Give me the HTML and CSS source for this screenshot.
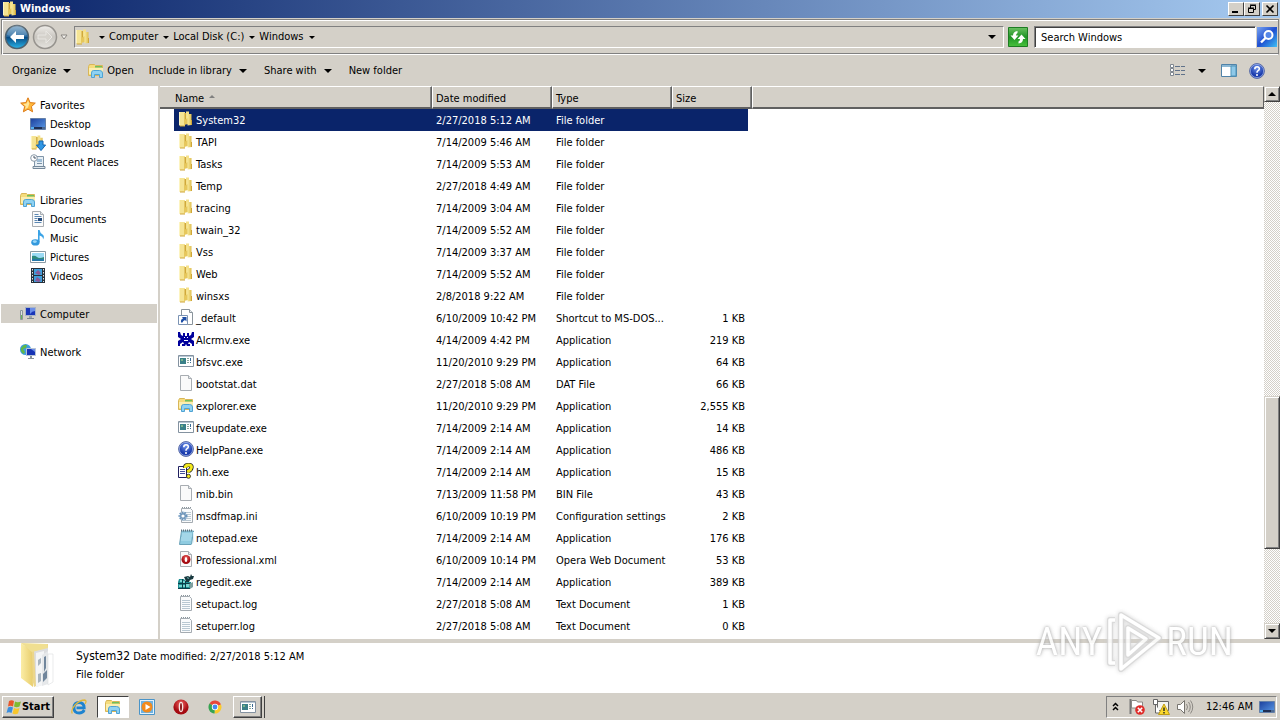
FILE: index.html
```html
<!DOCTYPE html>
<html lang="en">
<head>
  <meta charset="UTF-8">
  <title>Windows</title>
  <link rel="stylesheet" href="styles.css">
</head>
<body>
  <!-- Icon definitions -->
  <svg class="defs" aria-hidden="true">
    <defs>
      <linearGradient id="gFolder"><stop offset="0" stop-color="#f8ea9e"/><stop offset="1" stop-color="#dfbe4e"/></linearGradient>
      <linearGradient id="gScreen" x2="1" y2="1"><stop offset="0" stop-color="#1c3f9c"/><stop offset="1" stop-color="#5b9be8"/></linearGradient>
      <linearGradient id="gBack" x2="0" y2="1"><stop offset="0" stop-color="#7fa9c9"/><stop offset=".48" stop-color="#20649c"/><stop offset=".5" stop-color="#07477f"/><stop offset="1" stop-color="#29b6ec"/></linearGradient>
      <linearGradient id="gFwd" x2="0" y2="1"><stop offset="0" stop-color="#f0eeea"/><stop offset=".5" stop-color="#c9c6c0"/><stop offset="1" stop-color="#e6e4df"/></linearGradient>
      <radialGradient id="gHelp" cy=".3"><stop offset="0" stop-color="#6f93ea"/><stop offset="1" stop-color="#1a3bac"/></radialGradient>
      <radialGradient id="gRed" cy=".3"><stop offset="0" stop-color="#f0625f"/><stop offset="1" stop-color="#a50b12"/></radialGradient>
      <linearGradient id="gBig"><stop offset="0" stop-color="#fbeda6"/><stop offset="1" stop-color="#e8cd6c"/></linearGradient>
      <linearGradient id="gGreen" x2="0" y2="1"><stop offset="0" stop-color="#6cc163"/><stop offset=".5" stop-color="#1f9426"/><stop offset="1" stop-color="#48c13c"/></linearGradient>
      <linearGradient id="gFind" x2="1" y2="1"><stop offset="0" stop-color="#7aa4f0"/><stop offset=".5" stop-color="#1f4fd0"/><stop offset="1" stop-color="#3fc0f4"/></linearGradient>
    </defs>
    <symbol id="folder" viewBox="0 0 16 16">
      <path d="M1 1h6v14H2l-1-1z" fill="#f5e494"/><path d="M1 1h1v13H1z" fill="#fdf4c0"/>
      <path d="M6.500 2h2v11h-2z" fill="#d0a93a"/><path d="M8 .5h3v8H8z" fill="#f4e08a"/>
      <path d="M6 9l4-2v6l-4 1z" fill="#e6c75c"/><path d="M9.500 3h4v11l-4 .5z" fill="url(#gFolder)"/><path d="M2 14.500h5v1H2zM13 9h1v5h-1z" fill="#cfa63a"/>
    </symbol>
    <symbol id="star" viewBox="0 0 16 16">
      <path d="M8 .8l2.100 4.800 5.200.5-3.900 3.500 1.200 5.200L8 12.100l-4.600 2.700 1.200-5.200L.7 6.100l5.200-.5z" fill="#ffb83a" stroke="#dd7a16"/>
      <path d="M8 3.400l1.300 3.200-1.300 4-3 1.600.8-3L3.200 7l3.400-.4z" fill="#ffe69a"/>
    </symbol>
    <symbol id="desktop" viewBox="0 0 16 16">
      <path d="M.5 2.500h15v11H.5z" fill="url(#gScreen)" stroke="#6580a8"/>
      <path d="M1 11h14v2H1z" fill="#1f2f52"/><path d="M1 11h3v2H1z" fill="#51aef0"/><path d="M12 11.500h3v1h-3z" fill="#7da7d4"/>
    </symbol>
    <symbol id="downloads" viewBox="0 0 16 16">
      <use href="#folder" width="15" height="15"/>
      <path d="M9 6h4v4h2.600L11 15.600 6.400 10H9z" fill="#2f96e4" stroke="#1465b0"/>
    </symbol>
    <symbol id="recent" viewBox="0 0 16 16">
      <path d="M4.500 2.500h9v10h-9z" fill="#e7eff5" stroke="#8095a8"/><path d="M7 5h5v3H7z" fill="#9fbdd6"/><path d="M7 9h5v1H7z" fill="#7d93a6"/>
      <path d="M3 12.500h12v2H3z" fill="#dfe6ec" stroke="#74889a"/>
      <circle cx="4" cy="4" r="3.300" fill="#fff" stroke="#8a9aa8"/><path d="M4 2v2h2" fill="none" stroke="#456"/>
    </symbol>
    <symbol id="libraries" viewBox="0 0 16 16">
      <path d="M.5 3.500l1-2h5l1 1h7v10H.5z" fill="#f5dc7c" stroke="#d8b658"/>
      <path d="M7 3h7v1.500H7z" fill="#6fbf5c"/><path d="M1 5h14v6H1z" fill="#fbeeb0"/>
      <path d="M3.500 14.500v-4.500q0-2.500 2-2.500h6q3 0 3 2.500v4.500h-3v-3h-5v3z" fill="#8fd2f2" stroke="#4fa3d4"/>
    </symbol>
    <symbol id="page" viewBox="0 0 16 16">
      <path d="M2.500.5h8l3 3v12h-11z" fill="#fafafa" stroke="#a8adb2"/><path d="M10.500.5v3h3" fill="#e4e8ea" stroke="#a8adb2"/>
    </symbol>
    <symbol id="documents" viewBox="0 0 16 16">
      <use href="#page"/><path d="M4.500 3.500h4m-4 2h7m-7 2h3m-3 2h3m-3 2h7" stroke="#5c88b4"/><path d="M8 7h4v3H8z" fill="#244b7c"/>
    </symbol>
    <symbol id="music" viewBox="0 0 16 16">
      <path d="M8 0h1.600q.4 3 3 4.500 2.400 2 .4 5 .4-3-3.400-4V12H8z" fill="#3aa3e6"/>
      <ellipse cx="5.400" cy="12.400" rx="4.200" ry="3.100" fill="#3499dd"/><ellipse cx="4.800" cy="11.600" rx="2" ry="1.300" fill="#9bd8f8"/>
    </symbol>
    <symbol id="pictures" viewBox="0 0 16 16">
      <path d="M.5 2.500h15v11H.5z" fill="#fff" stroke="#8a9aa4"/><path d="M2 4h12v8H2z" fill="#9bdaf4"/>
      <path d="M2 7q3-1 5 1t7 0v4H2z" fill="#2e8a7e"/><path d="M2 10h12v2H2z" fill="#2478a8"/>
    </symbol>
    <symbol id="videos" viewBox="0 0 16 16">
      <path d="M1 0h14v15H1z" fill="#26303a"/><path d="M4 1h8v6H4zM4 8h8v6H4z" fill="#3f9fdc"/>
      <path d="M5 5l3-3 3 3-2 2zM5 13l2-4 4 3-2 2z" fill="#8b5a98"/>
      <path d="M2.500 1v13M13.500 1v13" stroke="#e4e8ea" stroke-dasharray="1.500 1.500"/>
    </symbol>
    <symbol id="computer" viewBox="0 0 16 16">
      <path d="M5.500 1.500h10v8h-10z" fill="#1a36b8" stroke="#a8b4c8"/><path d="M10 2h5v3q-3 0-5 3z" fill="#6b8ee8"/>
      <path d="M9 10h3v2H9z" fill="#9aa2aa"/><path d="M7 12h7v1H7z" fill="#7d868e"/>
      <path d="M.5 4.500h2v9h-2z" fill="#dfe3e4" stroke="#8c969c"/><path d="M1 9h1v4H1z" fill="#6bb45a"/>
    </symbol>
    <symbol id="network" viewBox="0 0 16 16">
      <circle cx="5.500" cy="5.500" r="5.500" fill="#3e9be2"/><path d="M2 3q2-3 5-2l-1 3-3 1 2 3-1 2Q0 8 1 4z" fill="#5fb848"/>
      <path d="M6.500 4.500h9v7h-9z" fill="#1733b4" stroke="#b8c4d4"/><path d="M11 5h4v3z" fill="#6b8ee8"/>
      <path d="M10 12h2v2h2v1H8v-1h2z" fill="#88929a"/>
    </symbol>
    <symbol id="shortcut" viewBox="0 0 16 16">
      <path d="M3.500.5h8l3 3v12h-11z" fill="#fff" stroke="#8a949c"/><path d="M11.500.5v3h3" fill="#e8ecee" stroke="#8a949c"/>
      <path d="M.5 6.500h9v9h-9z" fill="#fff" stroke="#7b93b4"/>
      <path d="M3 13.500q-.5-3.500 2-4L4 8h4.500v4.500L7 11q-2 .5-2.500 2.500z" fill="#1d4ea6"/>
    </symbol>
    <symbol id="crab" viewBox="0 0 16 16">
      <path d="M0 1h2l1 3 2 1h6l2-1 1-3h2v5l-3 2 3 2v5h-2v-2l-3-2-1 2h2v2h-3l-1-2-1 2H4v-2h2l-1-2-3 2v2H0v-5l3-2-3-2zM5 2h2v3H5zM9 2h2v3H9z" fill="#00009c"/>
      <path d="M6 6h1v1H6zM9 6h1v1H9zM6 9h4v1H6z" fill="#fff"/>
    </symbol>
    <symbol id="app" viewBox="0 0 16 16">
      <path d="M.5 2.500h15v11H.5z" fill="#fff" stroke="#8492a0"/><path d="M1 3h14v1H1z" fill="#b8c8d4"/>
      <path d="M2 5h6v6H2z" fill="#3a8088"/><path d="M3 6h2v2H3z" fill="#7ab48a"/><path d="M9 5.500h2m-2 2h2m-2 2h2" stroke="#8aa89c"/><path d="M12.500 5v3m0 1v1" stroke="#3a6c94"/>
    </symbol>
    <symbol id="help" viewBox="0 0 16 16">
      <circle cx="8" cy="8" r="7.400" fill="url(#gHelp)" stroke="#5d6fa8"/><circle cx="8" cy="8" r="6.600" fill="none" stroke="#b9caf4" stroke-width=".6"/>
      <path d="M5.800 6.300q0-2.500 2.300-2.500t2.200 2q0 1.100-1.200 1.900T8 9.700" fill="none" stroke="#fff" stroke-width="1.600"/><circle cx="8" cy="12" r="1" fill="#fff"/>
    </symbol>
    <symbol id="hh" viewBox="0 0 16 16">
      <path d="M.5 3.500h8v11h-8z" fill="#fff" stroke="#202060"/><path d="M2 6.500h5m-5 2h5m-5 2h5" stroke="#44509c"/>
      <path d="M7 5q0-3 3.500-3T13.500 4.500 10.500 8v1.500" fill="none" stroke="#222" stroke-width="4.200"/><path d="M7 5q0-3 3.500-3T13.500 4.500 10.500 8v1.500" fill="none" stroke="#f4ea1c" stroke-width="2.800"/>
      <circle cx="10.500" cy="13.300" r="2" fill="#f4ea1c" stroke="#222" stroke-width=".8"/>
    </symbol>
    <symbol id="text" viewBox="0 0 16 16">
      <path d="M2.500 1.500h9l2 2v12h-11z" fill="#fafbfc" stroke="#a4abb1"/><path d="M4 5.500h8m-8 2h8m-8 2h8m-8 2h8m-8 2h8" stroke="#b9c8d2"/>
      <path d="M3 .5h9" stroke="#8c979e" stroke-dasharray="1 1"/>
    </symbol>
    <symbol id="ini" viewBox="0 0 16 16">
      <use href="#text" x="1"/><circle cx="5" cy="9" r="3.500" fill="#dcebf6" stroke="#6a94bc" stroke-width="2" stroke-dasharray="1.500 1"/><circle cx="5" cy="9" r="2.300" fill="#fff" stroke="#6f95b8" stroke-width="1.400"/>
    </symbol>
    <symbol id="notepad" viewBox="0 0 16 16">
      <path d="M3.500 2h12l-2 13.500h-12z" fill="#8fcbe0" stroke="#6aa2b8"/><path d="M4 5h10M4 7h10M3 9h10M3 11h10" stroke="#b9e3f0"/>
      <path d="M3 1.500h12" stroke="#5c7480" stroke-width="2" stroke-dasharray="1 1"/><path d="M13.500 15.500l2-2V3" fill="none" stroke="#e4f4fa"/>
    </symbol>
    <symbol id="xml" viewBox="0 0 16 16">
      <use href="#page"/><circle cx="8" cy="8.500" r="4.500" fill="url(#gRed)"/><ellipse cx="8" cy="8.500" rx="1.300" ry="2.600" fill="#fff"/>
    </symbol>
    <symbol id="regedit" viewBox="0 0 16 16">
      <path d="M1 6h5l2 3h5v6H0v-6z" fill="#1c8e92"/><path d="M2 7h2v2H2zM5 8h2v2H5zM1 12h3v2H1zM5 12h2v2H5zM8 11h3v3H8z" fill="#77d4d0"/>
      <path d="M0 10.500h12M4.500 6v9M7.500 8v7M0 15.500h12" stroke="#0c3c48"/>
      <path d="M6 4l4-1 2 1 1-3 1 2 2 0-1 3-3 1-1 2-3 0-1-3z" fill="#17383e"/><path d="M9 4l2 1-1 1z" fill="#8fe0dc"/><path d="M11 11l4-2v5l-3 2z" fill="#7fa0a0"/>
    </symbol>
    <symbol id="bigfolder" viewBox="0 0 36 46">
      <path d="M5 2l23-1v36l-14 7z" fill="#ecd68a"/><path d="M14 8l14-4v36l-12 4z" fill="#dcdddf"/>
      <path d="M16 10l8-2v34l-8 2z" fill="#f4f5f6"/><path d="M18 17l3-2v5l-3 3zM18 31l3-1v8l-3 2z" fill="#a8b4be"/>
      <path d="M22 12l6-4v33l-6 2z" fill="#e6e8ea"/><path d="M24 14l2-1v12l-2 4zM23 31l4-4v8l-4 4z" fill="#71869c"/>
      <path d="M28 11h5v28l-5 3z" fill="#fff" stroke="#dcdddf" stroke-width=".6"/><path d="M1 0l11 9 1 35-12-9z" fill="url(#gBig)"/><path d="M1 0l26 1 1 4-16 4z" fill="#f0df91"/>
    </symbol>
    <symbol id="back" viewBox="0 0 26 26">
      <circle cx="13" cy="13" r="11.500" fill="url(#gBack)" stroke="#50626e" stroke-width="1.500"/><path d="M3 11a10 10 0 0 1 20 0q-10 4-20 0z" fill="#fff" opacity=".18"/>
      <path d="M6 13l6-6v4h8v4h-8v4z" fill="#fff"/>
    </symbol>
    <symbol id="forward" viewBox="0 0 26 26">
      <circle cx="13" cy="13" r="11.500" fill="url(#gFwd)" stroke="#96938e" stroke-width="1.500"/>
      <path d="M20 13l-6-6v4H6v4h8v4z" fill="#d5d2cc" stroke="#e8e6e2"/>
    </symbol>
    <symbol id="refresh" viewBox="0 0 20 20">
      <path d="M.5.5h19v19H.5z" fill="url(#gGreen)" stroke="#1d7c22"/>
      <path d="M9.500 4Q5 4.500 5 8.500H2.500L6.500 13l4-4.500H8Q8 6.500 9.500 6z" fill="#fff"/><path d="M10.500 16.500q4.500-.5 4.500-4.500h2.500l-4-4.500-4 4.500H12q0 2-1.500 2.500z" fill="#fff"/>
    </symbol>
    <symbol id="find" viewBox="0 0 20 20">
      <path d="M0 0h20v20H0z" fill="url(#gFind)"/><circle cx="11.500" cy="8" r="4" fill="#5586e8" stroke="#fff" stroke-width="2"/><path d="M8.500 11L4 15.500" stroke="#fff" stroke-width="2.400"/>
    </symbol>
    <symbol id="views" viewBox="0 0 16 16">
      <path d="M.5 1.500h3v3h-3zM.5 5.500h3v3h-3zM.5 9.500h3v3h-3z" fill="#fff" stroke="#7f8790"/><path d="M5 3.500h5m1 0h4M5 7.500h5m1 0h4M5 11.500h5m1 0h4" stroke="#60728a"/>
    </symbol>
    <symbol id="pane" viewBox="0 0 16 16">
      <path d="M.5 1.500h15v12H.5z" fill="#fff" stroke="#4f82a8"/><path d="M1 2h14v2H1z" fill="#8cb8d4"/><path d="M10 3h5v10h-5z" fill="#8ec8e8" stroke="#4f93b8"/>
    </symbol>
    <symbol id="flag" viewBox="0 0 18 18">
      <path d="M2.500 1v15" stroke="#777" stroke-width="2"/><path d="M3.500 2.500h5l1 1.500h5v7h-5l-1-1h-5z" fill="#fff" stroke="#8b8884"/>
      <circle cx="12" cy="12" r="4.800" fill="#df2b28"/><path d="M9.800 9.800l4.400 4.400m0-4.400l-4.400 4.400" stroke="#fff" stroke-width="1.600"/>
    </symbol>
    <symbol id="netwarn" viewBox="0 0 18 18">
      <path d="M5.500 3.500h11v9h-11z" fill="#f4f4f0" stroke="#666"/><path d="M1.500 1.500h4v5h-4zM3.500 6v9h5" fill="#fff" stroke="#666"/>
      <path d="M12 6l5.500 10.500h-11z" fill="#fbd92c" stroke="#c09c14"/><path d="M12 9.500v3.500m0 1v1.500" stroke="#222" stroke-width="1.400"/>
    </symbol>
    <symbol id="volume" viewBox="0 0 18 18">
      <path d="M1.500 6.500h3l4-4v13l-4-4h-3z" fill="#fff" stroke="#77746f"/><path d="M10.500 6q2 3 0 6M12.500 4q3.500 5 0 10M14.500 2.500q4.500 6.500 0 13" fill="none" stroke="#8c8984"/>
    </symbol>
    <symbol id="ie" viewBox="0 0 16 16">
      <path d="M13.300 11Q11.700 14 8.200 14 3 14 3 8.700 3 3.500 8 3.500t5.200 5.300H5.500" fill="none" stroke="#1d83d0" stroke-width="2.800"/>
      <path d="M1.300 14.500Q-.5 11 4 6T14 1q2 1 0 4" fill="none" stroke="#e0b83c" stroke-width="1.300"/>
    </symbol>
    <symbol id="wmp" viewBox="0 0 16 16">
      <path d="M.5.5h15v15H.5z" fill="#e4f1fa" stroke="#4a94c8"/><path d="M2 2h12v12H2z" fill="#6cb2e4"/><circle cx="8" cy="8" r="5.500" fill="#f28a1c"/><path d="M6.500 5l5 3-5 3z" fill="#fff"/>
    </symbol>
    <symbol id="opera" viewBox="0 0 16 16">
      <circle cx="8" cy="8" r="7.600" fill="url(#gRed)"/><ellipse cx="8" cy="8" rx="2.300" ry="5.200" fill="#f6e4e2"/><ellipse cx="8" cy="8" rx="1" ry="4" fill="#8b1a1c"/>
    </symbol>
    <symbol id="chrome" viewBox="0 0 16 16">
      <path d="M8 8L2.500 4.500A6.500 6.500 0 0 1 14 5.500z" fill="#e8463a"/><path d="M8 8l6-2.500A6.500 6.500 0 0 1 7.500 14.500z" fill="#fbcb2d"/><path d="M8 8l-.5 6.500A6.500 6.500 0 0 1 2.500 4.500z" fill="#36a452"/>
      <circle cx="8" cy="8" r="3.200" fill="#fff"/><circle cx="8" cy="8" r="2.400" fill="#4688f0"/>
    </symbol>
    <symbol id="winflag" viewBox="0 0 16 16">
      <path d="M3 2q2.500-1.500 5 0L7 7.500q-2.500-1.500-5 0z" fill="#e8562a"/><path d="M9 2.500q2.500 1.500 6 0l-1.500 5q-3 1.500-5.500 0z" fill="#7fba32"/>
      <path d="M2 8.500q2.500-1.500 5 0L5.500 14Q3 12.500.5 14z" fill="#3b8ede"/><path d="M8 9q2.500 1.500 5.500 0L12 14.500q-3 1.500-5.500 0z" fill="#f8c62c"/>
    </symbol>
  </svg>

  <header class="titlebar">
    <svg class="icon"><use href="#folder"/></svg>
    <h1>Windows</h1>
    <div class="window-buttons">
      <button aria-label="Minimize"><svg viewBox="0 0 12 10"><path d="M2 8h6" stroke="#000" stroke-width="2"/></svg></button>
      <button aria-label="Restore"><svg viewBox="0 0 12 10"><path d="M4.500 4V1.500h5v4H8M4 1h6M2.500 4.500h5v4h-5zM2 4h6" fill="none" stroke="#000"/></svg></button>
      <button class="close" aria-label="Close"><svg viewBox="0 0 12 10"><path d="M2.500 1.500l7 7m0-7l-7 7" stroke="#000" stroke-width="1.600"/></svg></button>
    </div>
  </header>

  <!-- Address bar -->
  <div class="addressbar">
    <button class="round" aria-label="Back"><svg><use href="#back"/></svg></button>
    <button class="round" aria-label="Forward"><svg><use href="#forward"/></svg></button>
    <svg class="history" viewBox="0 0 8 6"><path d="M1 1h6L4 5z" fill="#f4f2ee" stroke="#8a8782"/></svg>
    <nav class="path">
      <svg class="icon"><use href="#folder"/></svg>
      <i class="arrow small"></i><a href="#">Computer</a>
      <i class="arrow small"></i><a href="#">Local Disk (C:)</a>
      <i class="arrow small"></i><a href="#">Windows</a>
      <i class="arrow small"></i><i class="arrow last"></i>
    </nav>
    <button class="refresh" aria-label="Refresh"><svg><use href="#refresh"/></svg></button>
    <input class="search" type="text" aria-label="Search" placeholder="Search Windows">
    <button class="find" aria-label="Go"><svg><use href="#find"/></svg></button>
  </div>

  <!-- Command bar -->
  <div class="toolbar">
    <button>Organize<i class="arrow"></i></button>
    <button class="open"><svg class="icon"><use href="#libraries"/></svg>Open</button>
    <button>Include in library<i class="arrow"></i></button>
    <button>Share with<i class="arrow"></i></button>
    <button>New folder</button>
    <div class="toolbar-right">
      <button aria-label="Change view"><svg class="icon"><use href="#views"/></svg><i class="arrow view-arrow"></i></button>
      <button aria-label="Preview pane"><svg class="icon"><use href="#pane"/></svg></button>
      <button aria-label="Help"><svg class="icon"><use href="#help"/></svg></button>
    </div>
  </div>

  <main class="content">
    <nav class="sidebar">
      <ul>
        <li class="root"><a href="#"><svg class="icon"><use href="#star"/></svg>Favorites</a></li>
        <li><a href="#"><svg class="icon"><use href="#desktop"/></svg>Desktop</a></li>
        <li><a href="#"><svg class="icon"><use href="#downloads"/></svg>Downloads</a></li>
        <li><a href="#"><svg class="icon"><use href="#recent"/></svg>Recent Places</a></li>
      </ul>
      <ul>
        <li class="root"><a href="#"><svg class="icon"><use href="#libraries"/></svg>Libraries</a></li>
        <li><a href="#"><svg class="icon"><use href="#documents"/></svg>Documents</a></li>
        <li><a href="#"><svg class="icon"><use href="#music"/></svg>Music</a></li>
        <li><a href="#"><svg class="icon"><use href="#pictures"/></svg>Pictures</a></li>
        <li><a href="#"><svg class="icon"><use href="#videos"/></svg>Videos</a></li>
      </ul>
      <ul>
        <li class="root current"><a href="#"><svg class="icon"><use href="#computer"/></svg>Computer</a></li>
      </ul>
      <ul>
        <li class="root"><a href="#"><svg class="icon"><use href="#network"/></svg>Network</a></li>
      </ul>
    </nav>

    <section class="files">
      <table>
        <colgroup><col class="c-pad"><col class="c-name"><col class="c-date"><col class="c-type"><col class="c-size"><col></colgroup>
        <thead>
          <tr><td></td><th>Name<i class="sort"></i></th><th>Date modified</th><th>Type</th><th>Size</th><td class="fill"></td></tr>
        </thead>
        <tbody id="rows"></tbody>
      </table>
    </section>

    <div class="scrollbar">
      <button aria-label="Scroll up"><i class="arrow up"></i></button>
      <div class="track-above"></div>
      <div class="thumb"></div>
      <div class="track-below"></div>
      <button aria-label="Scroll down"><i class="arrow"></i></button>
    </div>
  </main>

  <footer class="details">
    <svg class="preview"><use href="#bigfolder"/></svg>
    <div class="info">
      <p><span class="name">System32</span> Date modified: 2/27/2018 5:12 AM</p>
      <p>File folder</p>
    </div>
    <div class="watermark">
      <span>ANY</span>
      <svg viewBox="0 0 58 64">
        <g fill="none" stroke="#d4d4d4" stroke-width="6" stroke-linejoin="round"><path d="M16 5L54 28 16 59zM23 18v27l18-16zM10 10H5v43h5"/></g>
        <g fill="none" stroke="#fff" stroke-width="3.500" stroke-linejoin="round"><path d="M16 5L54 28 16 59zM23 18v27l18-16zM10 10H5v43h5"/></g>
      </svg>
      <span>RUN</span>
    </div>
  </footer>

  <div class="taskbar">
    <button class="start"><svg class="icon"><use href="#winflag"/></svg>Start</button>
    <button class="task" aria-label="Internet Explorer"><svg class="icon"><use href="#ie"/></svg></button>
    <button class="task pressed" aria-label="Explorer"><svg class="icon"><use href="#libraries"/></svg></button>
    <button class="task" aria-label="Media Player"><svg class="icon"><use href="#wmp"/></svg></button>
    <button class="task" aria-label="Opera"><svg class="icon"><use href="#opera"/></svg></button>
    <button class="task" aria-label="Chrome"><svg class="icon"><use href="#chrome"/></svg></button>
    <button class="task raised" aria-label="Application"><svg class="icon"><use href="#app"/></svg></button>
    <div class="tray">
      <svg class="chevrons" viewBox="0 0 7 9"><path d="M1 4l2.500-2.500L6 4M1 8l2.500-2.500L6 8" fill="none" stroke="#000" stroke-width="1.500"/></svg>
      <svg class="tray-icon"><use href="#flag"/></svg>
      <svg class="tray-icon"><use href="#netwarn"/></svg>
      <svg class="tray-icon"><use href="#volume"/></svg>
      <time>12:46 AM</time>
      <svg class="icon"><use href="#desktop"/></svg>
    </div>
  </div>

  <script>
    // icon, name, date modified, type, size
    const files = [
      ['folder', 'System32', '2/27/2018 5:12 AM', 'File folder', ''],
      ['folder', 'TAPI', '7/14/2009 5:46 AM', 'File folder', ''],
      ['folder', 'Tasks', '7/14/2009 5:53 AM', 'File folder', ''],
      ['folder', 'Temp', '2/27/2018 4:49 AM', 'File folder', ''],
      ['folder', 'tracing', '7/14/2009 3:04 AM', 'File folder', ''],
      ['folder', 'twain_32', '7/14/2009 5:52 AM', 'File folder', ''],
      ['folder', 'Vss', '7/14/2009 3:37 AM', 'File folder', ''],
      ['folder', 'Web', '7/14/2009 5:52 AM', 'File folder', ''],
      ['folder', 'winsxs', '2/8/2018 9:22 AM', 'File folder', ''],
      ['shortcut', '_default', '6/10/2009 10:42 PM', 'Shortcut to MS-DOS...', '1 KB'],
      ['crab', 'Alcrmv.exe', '4/14/2009 4:42 PM', 'Application', '219 KB'],
      ['app', 'bfsvc.exe', '11/20/2010 9:29 PM', 'Application', '64 KB'],
      ['page', 'bootstat.dat', '2/27/2018 5:08 AM', 'DAT File', '66 KB'],
      ['libraries', 'explorer.exe', '11/20/2010 9:29 PM', 'Application', '2,555 KB'],
      ['app', 'fveupdate.exe', '7/14/2009 2:14 AM', 'Application', '14 KB'],
      ['help', 'HelpPane.exe', '7/14/2009 2:14 AM', 'Application', '486 KB'],
      ['hh', 'hh.exe', '7/14/2009 2:14 AM', 'Application', '15 KB'],
      ['page', 'mib.bin', '7/13/2009 11:58 PM', 'BIN File', '43 KB'],
      ['ini', 'msdfmap.ini', '6/10/2009 10:19 PM', 'Configuration settings', '2 KB'],
      ['notepad', 'notepad.exe', '7/14/2009 2:14 AM', 'Application', '176 KB'],
      ['xml', 'Professional.xml', '6/10/2009 10:14 PM', 'Opera Web Document', '53 KB'],
      ['regedit', 'regedit.exe', '7/14/2009 2:14 AM', 'Application', '389 KB'],
      ['text', 'setupact.log', '2/27/2018 5:08 AM', 'Text Document', '1 KB'],
      ['text', 'setuperr.log', '2/27/2018 5:08 AM', 'Text Document', '0 KB']
    ];

    document.getElementById('rows').innerHTML = files.map((f, i) => `
      <tr class="${i === 0 ? 'selected' : ''}">
        <td></td>
        <td class="name"><svg class="icon"><use href="#${f[0]}"/></svg>${f[1]}</td>
        <td>${f[2]}</td>
        <td>${f[3]}</td>
        <td class="size">${f[4]}</td>
        <td></td>
      </tr>`).join('');
  </script>
</body>
</html>
```
FILE: styles.css
```css
/* Global Styles */
* {
  box-sizing: border-box;
}
body {
  margin: 0;
  height: 100vh;
  display: flex;
  flex-direction: column;
  overflow: hidden;
  background: #d4d0c8;
  color: #000;
  font: 11px/14px "DejaVu Sans Condensed", "Liberation Sans", sans-serif;
}
button, input {
  font: inherit;
  color: inherit;
  margin: 0;
  padding: 0;
  border: 0;
  background: none;
}
a {
  color: inherit;
  text-decoration: none;
}
svg {
  display: block;
  flex: none;
}
.defs {
  position: absolute;
  width: 0;
  height: 0;
}
.icon {
  width: 16px;
  height: 16px;
}

/* Arrows */
.arrow {
  flex: none;
  border: 4px solid transparent;
  border-top-color: #000;
  border-bottom: 0;
}
.arrow.small {
  border-width: 3px;
  border-bottom: 0;
}
.arrow.up {
  border-top: 0;
  border-bottom: 4px solid #000;
}

/* Title bar */
.titlebar {
  display: flex;
  align-items: center;
  height: 18px;
  padding: 0 2px;
  background: linear-gradient(90deg, #0a246a, #a6caf0);
  color: #fff;
}
.titlebar h1 {
  margin: 0 auto 0 2px;
  font-size: 11px;
}
.window-buttons {
  display: flex;
}
.window-buttons button {
  width: 16px;
  height: 14px;
  padding: 1px;
  background: #d4d0c8;
  border: 1px solid;
  border-color: #fff #404040 #404040 #fff;
}
.window-buttons .close {
  margin-left: 2px;
}

/* Address bar */
.addressbar {
  display: flex;
  align-items: center;
  height: 36px;
  margin: 1px 1px 0;
  padding: 0 1px 0 2px;
  border: 1px solid;
  border-color: #808080 #808080 #fff #808080;
  box-shadow: inset 1px 1px #fff, inset 0 -1px #808080;
}
.round, .round svg {
  width: 26px;
  height: 26px;
}
.round + .round {
  margin-left: 2px;
}
.history {
  width: 8px;
  height: 6px;
  margin: 0 6px 0 2px;
}
.path {
  flex: 1;
  display: flex;
  align-items: center;
  height: 22px;
  border: 1px solid;
  border-color: #808080 #fff #fff #808080;
}
.path .small {
  margin: 0 4px 0 5px;
}
.path .icon + .small {
  margin-left: 8px;
}
.path .last {
  margin: 0 7px 0 auto;
}
.refresh, .refresh svg {
  width: 20px;
  height: 20px;
}
.refresh {
  margin: 0 6px 0 4px;
}
.search {
  width: 222px;
  height: 22px;
  padding: 0 6px;
  background: #fff;
  border: 1px solid;
  border-color: #808080 #fff #fff #808080;
  box-shadow: inset 1px 1px #404040;
}
.search::placeholder {
  color: #000;
  opacity: 1;
}
.find, .find svg {
  width: 20px;
  height: 20px;
}
.find {
  margin-left: 1px;
}

/* Toolbar */
.toolbar {
  display: flex;
  align-items: center;
  height: 31px;
  padding: 0 15px 0 12px;
}
.toolbar button {
  display: flex;
  align-items: center;
  margin-right: 17px;
}
.toolbar .arrow {
  margin-left: 7px;
}
.toolbar .open {
  gap: 3px;
  margin-right: 15px;
}
.toolbar-right {
  display: flex;
  gap: 12px;
  margin-left: auto;
}
.toolbar .toolbar-right button {
  margin: 0;
}
.toolbar .view-arrow {
  margin: 0 3px 0 12px;
}

/* Content */
.content {
  flex: 1;
  display: flex;
  min-height: 0;
}
.sidebar {
  flex: none;
  width: 158px;
  padding: 9px 1px 0;
  background: #fff;
}
.sidebar ul {
  margin: 0 0 19px;
  padding: 0;
  list-style: none;
}
.sidebar a {
  display: flex;
  align-items: center;
  gap: 4px;
  height: 19px;
  padding: 2px 0 0 29px;
}
.sidebar .icon {
  margin-bottom: 2px;
}
.sidebar .root a {
  padding-left: 19px;
}
.sidebar .current {
  background: #d4d0c8;
}

/* File list */
.files {
  flex: 1;
  margin-left: 2px;
  overflow: hidden;
  background: #fff;
}
.files table {
  width: 100%;
  table-layout: fixed;
  border-spacing: 0;
}
.c-pad { width: 14px; }
.c-name { width: 258px; }
.c-date, .c-type { width: 120px; }
.c-size { width: 80px; }
.files th, .files td {
  padding: 2px 0 0 4px;
  text-align: left;
  font-weight: normal;
  white-space: nowrap;
}
.files thead th, .files thead td {
  height: 23px;
  background: #d4d0c8;
  border-top: 1px solid #fff;
  border-bottom: 2px solid #606060;
}
.files thead th {
  padding: 3px 0 0 3px;
  border-right: 1px solid #606060;
  box-shadow: inset -1px 0 #808080;
}
.files thead th + th, .files thead .fill {
  border-left: 1px solid #fff;
}
.files thead .fill {
  border-right: 1px solid #606060;
}
.files thead th:nth-child(2) {
  padding-left: 1px;
}
.sort {
  display: inline-block;
  margin: 0 0 4px 5px;
  border: 3px solid transparent;
  border-top: 0;
  border-bottom-color: #808080;
}
.files tbody td {
  height: 22px;
}
.files .name {
  display: flex;
  align-items: center;
  gap: 2px;
}
.files .icon {
  margin-bottom: 4px;
}
.files .size {
  padding-right: 3px;
  text-align: right;
  border-right: 4px solid transparent;
  background-clip: padding-box;
}
.selected td:nth-child(n+2):nth-child(-n+5) {
  background-color: #0a246a;
  color: #fff;
}

/* Scrollbar */
.scrollbar {
  flex: none;
  display: flex;
  flex-direction: column;
  width: 16px;
  background: repeating-conic-gradient(#fff 0 25%, #d4d0c8 0 50%) 0 0 / 2px 2px;
}
.scrollbar button {
  display: flex;
  align-items: center;
  justify-content: center;
  height: 16px;
}
.scrollbar button, .thumb {
  background: #d4d0c8;
  border: 1px solid;
  border-color: #d4d0c8 #404040 #404040 #d4d0c8;
  box-shadow: inset 1px 1px #fff, inset -1px -1px #808080;
}
.track-above { flex: 296; }
.thumb { flex: 152; }
.track-below { flex: 74; }

/* Details pane */
.details {
  position: relative;
  display: flex;
  height: 53px;
  padding-left: 20px;
  background: #fff;
  border-top: 4px solid #d4d0c8;
}
.preview {
  width: 36px;
  height: 46px;
  margin-right: 20px;
}
.info {
  padding-top: 2px;
}
.details p {
  margin: 4px 0 0;
}
.details .name {
  font-size: 12px;
}

/* Watermark over the list and the details pane */
.watermark {
  position: absolute;
  right: 47px;
  bottom: 18px;
  display: flex;
  align-items: center;
  gap: 3px;
  opacity: .85;
  color: #fff;
  font: 39px/40px "Roboto Condensed", "Liberation Sans Narrow", "Liberation Sans", sans-serif;
  text-shadow: 0 0 2px #aaa, 0 0 4px #aaa;
}
.watermark svg {
  width: 58px;
  height: 64px;
  filter: drop-shadow(0 0 2px #ccc);
}

/* Taskbar */
.taskbar {
  display: flex;
  align-items: center;
  height: 28px;
  padding: 0 3px 0 2px;
  border-top: 1px solid #fff;
  box-shadow: 0 -1px #d4d0c8;
}
.start, .task {
  display: flex;
  align-items: center;
  justify-content: center;
  height: 22px;
}
.start, .raised {
  border: 1px solid;
  border-color: #fff #404040 #404040 #fff;
  box-shadow: inset -1px -1px #808080;
}
.start {
  width: 52px;
  margin-right: 9px;
  font-weight: bold;
}
.task {
  width: 32px;
  margin-right: 2px;
}
.task.pressed {
  background: #fff;
  border: 1px solid;
  border-color: #404040 #fff #fff #404040;
}
.task.raised {
  width: 29px;
  box-shadow: inset -1px -1px #808080, 2px 0 #d4d0c8, 3px 0 #404040;
}
.tray {
  display: flex;
  align-items: center;
  gap: 6px;
  height: 22px;
  margin-left: auto;
  padding: 0 1px 0 5px;
  border: 1px solid;
  border-color: #808080 #fff #fff #808080;
}
.chevrons {
  width: 7px;
  height: 9px;
  margin-right: 3px;
}
.tray-icon {
  width: 18px;
  height: 18px;
}
.tray time {
  margin-left: 6px;
}
```
